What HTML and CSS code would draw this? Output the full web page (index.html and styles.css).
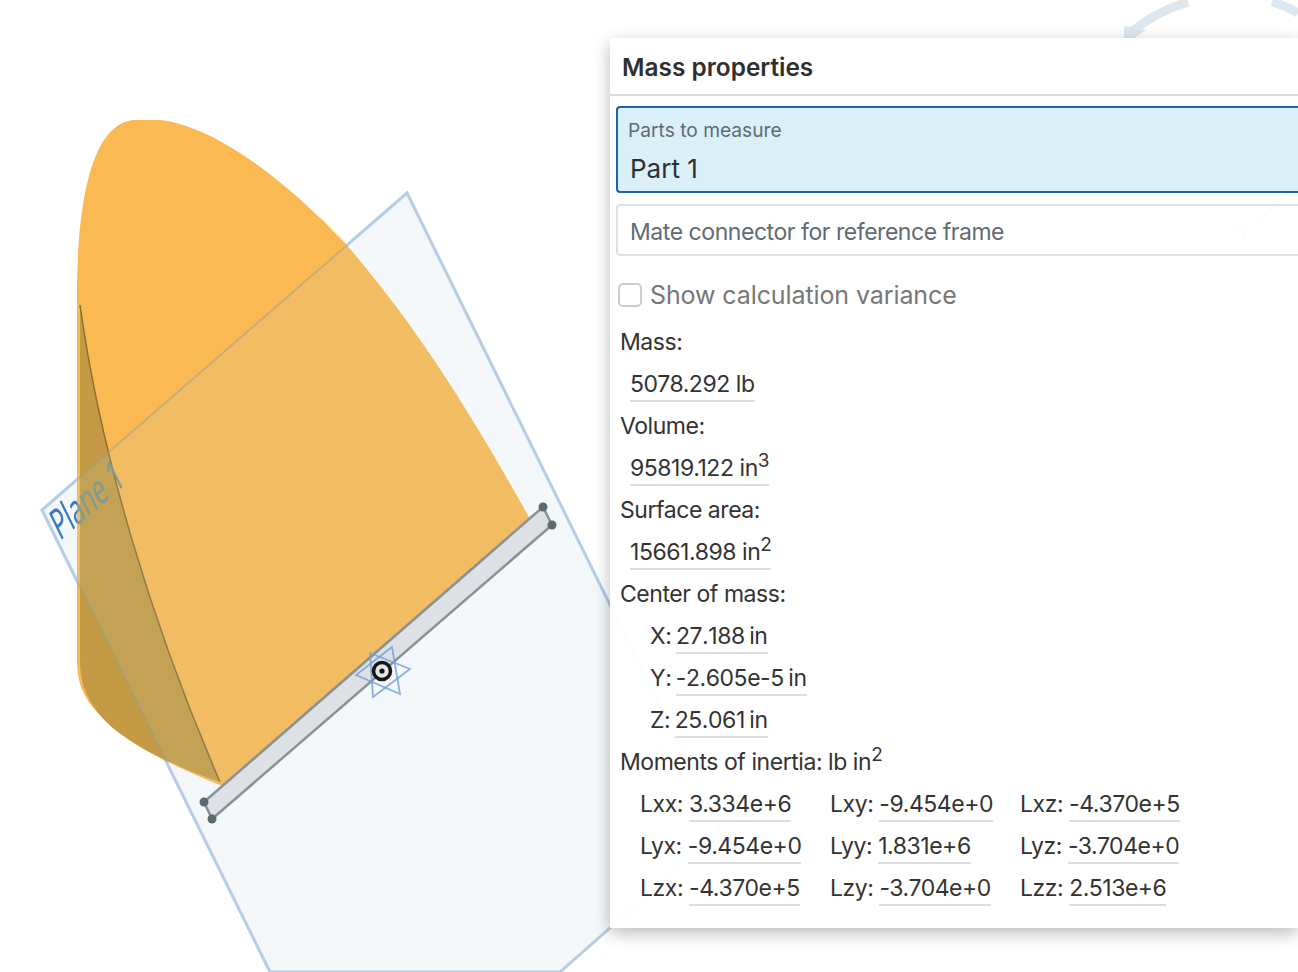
FILE: index.html
```html
<!DOCTYPE html>
<html lang="en">
<head>
    <meta charset="UTF-8">
    <title>Mass properties</title>
    <link rel="stylesheet" href="styles.css">
</head>
<body>
    <div class="viewport">
        <svg class="model" width="1298" height="972" viewBox="0 0 1298 972">
            <defs>
                <clipPath id="part-clip">
                    <path d="M77 660 L77 290 C78 190 95 122 135 120 L160 120 C215 126 285 180 345 243 C420 330 475 420 530 519 L222 786 C170 765 120 740 100 715 C85 700 77 685 77 660 Z"/>
                </clipPath>
            </defs>

            <!-- triad behind the panel -->
            <path d="M1130 33 Q1155 12 1188 2" fill="none" stroke="#dfe7ee" stroke-width="9"/>
            <path d="M1124 26 L1146 30 L1124 45 Z" fill="#dfe7ee"/>
            <path d="M1272 2 Q1286 6 1298 13" fill="none" stroke="#dfe7ee" stroke-width="9"/>
            <path d="M1255 222 L1290 192" fill="none" stroke="#8fe0a0" stroke-width="3"/>
            <text x="1235" y="241" class="triad-label">Y</text>

            <!-- plane -->
            <polygon points="42,510 407,193 721,830 560,972 270,972" fill="#f4f8fb" stroke="#b5cde6" stroke-width="3"/>
            <text class="plane-label" transform="matrix(0.57 -0.49 0.53 1.08 60 541)">Plane 1</text>

            <!-- part -->
            <path d="M77 660 L77 290 C78 190 95 122 135 120 L160 120 C215 126 285 180 345 243 C420 330 475 420 530 519 L222 786 C170 765 120 740 100 715 C85 700 77 685 77 660 Z" fill="#fbb954"/>
            <path d="M80 305 C100 450 150 620 220 782 C170 765 120 740 100 715 C88 700 80 685 80 660 Z" fill="#c59a45"/>
            <path d="M80 305 C100 450 150 620 220 782" fill="none" stroke="#8a6d35" stroke-width="1.5"/>

            <!-- plane seen over the part -->
            <g clip-path="url(#part-clip)">
                <polygon points="42,510 407,193 721,830 560,972 270,972" fill="#b5d7cc" fill-opacity="0.12" stroke="#8f9f95" stroke-opacity="0.45" stroke-width="2"/>
                <text class="plane-label plane-label-over" transform="matrix(0.57 -0.49 0.53 1.08 60 541)">Plane 1</text>
            </g>

            <!-- plank -->
            <polygon points="204,802 543,507 552,525 212,819" fill="#dde0e5" stroke="#8a9296" stroke-width="2.5" stroke-linejoin="round"/>
            <circle cx="204" cy="802" r="4.5" fill="#5c6a70"/>
            <circle cx="212" cy="819" r="4.5" fill="#5c6a70"/>
            <circle cx="543" cy="507" r="4.5" fill="#5c6a70"/>
            <circle cx="552" cy="525" r="4.5" fill="#5c6a70"/>

            <!-- mate connector -->
            <g fill="none" stroke="#6f9fd8" stroke-width="1.8" stroke-opacity="0.8">
                <polygon points="392,647 400,694 356,675"/>
                <polygon points="410,669 373,697 370,653"/>
            </g>
            <circle cx="382" cy="671" r="8.5" fill="#e4e4e4" stroke="#161616" stroke-width="3.5"/>
            <circle cx="382" cy="671" r="2.6" fill="#161616"/>
        </svg>

        <div class="panel">
            <div class="panel-title">Mass properties</div>
            <div class="panel-body">
                <div class="field field-active">
                    <div class="field-label">Parts to measure</div>
                    <div class="field-value">Part 1</div>
                </div>
                <div class="field field-empty">Mate connector for reference frame</div>
                <div class="check-row">
                    <span class="checkbox"></span>
                    <span>Show calculation variance</span>
                </div>

                <div class="row">Mass:</div>
                <div class="row row-value"><span class="val">5078.292 lb</span></div>
                <div class="row">Volume:</div>
                <div class="row row-value"><span class="val">95819.122 in<sup>3</sup></span></div>
                <div class="row">Surface area:</div>
                <div class="row row-value"><span class="val">15661.898 in<sup>2</sup></span></div>
                <div class="row">Center of mass:</div>
                <div class="row row-axis">X: <span class="val">27.188 in</span></div>
                <div class="row row-axis">Y: <span class="val">-2.605e-5 in</span></div>
                <div class="row row-axis">Z: <span class="val">25.061 in</span></div>
                <div class="row">Moments of inertia: lb in<sup>2</sup></div>

                <div class="moments">
                    <div class="row">Lxx: <span class="val">3.334e+6</span></div>
                    <div class="row">Lxy: <span class="val">-9.454e+0</span></div>
                    <div class="row">Lxz: <span class="val">-4.370e+5</span></div>
                    <div class="row">Lyx: <span class="val">-9.454e+0</span></div>
                    <div class="row">Lyy: <span class="val">1.831e+6</span></div>
                    <div class="row">Lyz: <span class="val">-3.704e+0</span></div>
                    <div class="row">Lzx: <span class="val">-4.370e+5</span></div>
                    <div class="row">Lzy: <span class="val">-3.704e+0</span></div>
                    <div class="row">Lzz: <span class="val">2.513e+6</span></div>
                </div>
            </div>
        </div>
    </div>
</body>
</html>
```

FILE: styles.css
```css
html, body {
    margin: 0;
    background: #fff;
}
body {
    font-family: Inter, "Noto Sans", sans-serif;
    color: #333;
}
.viewport {
    position: relative;
    width: 1298px;
    height: 972px;
    overflow: hidden;
}
.model {
    display: block;
    filter: blur(0.5px);
}
.plane-label {
    font-family: "Noto Sans", sans-serif;
    font-size: 34px;
    fill: #3a78c0;
}
.plane-label-over {
    fill: #7f9a98;
}
.triad-label {
    font-size: 24px;
    fill: #8fe0a0;
}
.panel {
    position: absolute;
    left: 610px;
    top: 38px;
    width: 688px;
    height: 890px;
    background: rgba(255, 255, 255, 0.95);
    box-shadow: 0 5px 16px rgba(0, 0, 0, 0.28);
}
.panel-title {
    height: 56px;
    line-height: 58px;
    padding-left: 12px;
    font-size: 24.4px;
    font-weight: 600;
    color: #2f2f2f;
    border-bottom: 2px solid #d8dadb;
}
.panel-body {
    padding: 10px 0 0 10px;
    font-size: 23px;
    letter-spacing: -0.45px;
}
.field {
    box-sizing: border-box;
    margin-left: -4px;
    border-radius: 4px 0 0 4px;
}
.field-active {
    height: 87px;
    padding: 10px 10px;
    background: #daf0f9;
    border: 2px solid #1e63a8;
    border-right: none;
}
.field-label {
    font-size: 19.2px;
    line-height: 24px;
    letter-spacing: 0;
    color: #5f6b75;
}
.field-value {
    margin: 12px 0 0 2px;
    font-size: 26px;
    line-height: 30px;
    letter-spacing: 0;
    color: #2f2f2f;
}
.field-empty {
    height: 52px;
    margin-top: 11px;
    padding-left: 12px;
    line-height: 52px;
    border: 2px solid #e0e0e0;
    border-right: none;
    color: #5f6b75;
}
.check-row {
    display: flex;
    align-items: center;
    gap: 8px;
    height: 42px;
    margin: 18px 0 5px;
    font-size: 25px;
    letter-spacing: -0.1px;
    color: #777;
}
.checkbox {
    box-sizing: border-box;
    width: 24px;
    height: 24px;
    margin-left: -2px;
    border: 2px solid #ccc;
    border-radius: 5px;
}
.row {
    height: 42px;
    line-height: 42px;
    white-space: nowrap;
    color: #333;
}
.row-value {
    padding-left: 10px;
}
.row-axis {
    padding-left: 30px;
    font-kerning: none;
    word-spacing: -1.5px;
}
.val {
    display: inline-block;
    height: 34px;
    line-height: 36px;
    border-bottom: 2px solid #dddddd;
}
sup {
    font-size: 19px;
    line-height: 0;
}
.moments {
    display: grid;
    grid-template-columns: 190px 190px 190px;
    padding-left: 20px;
}
```
